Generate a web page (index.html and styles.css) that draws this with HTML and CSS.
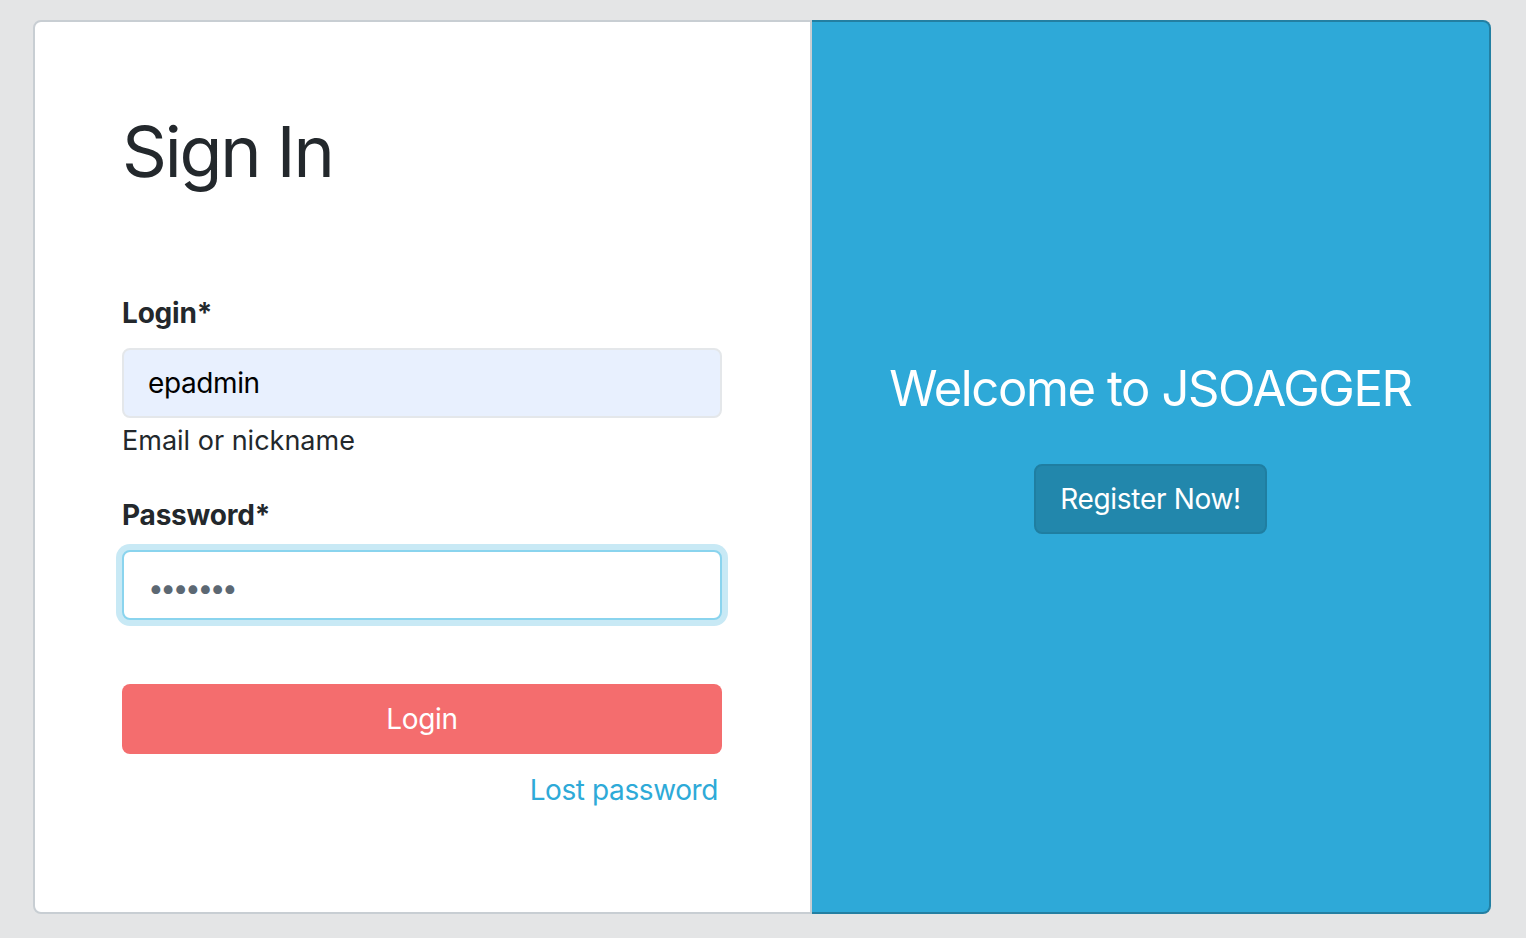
FILE: index.html
```html
<!DOCTYPE html>
<html lang="en">
<head>
<meta charset="utf-8">
<title>Sign In</title>
<link rel="stylesheet" href="styles.css">
</head>
<body>
<div class="page">
  <div class="card-group">
    <div class="card card-login">
      <h1 class="title">Sign In</h1>
      <form class="form">
        <div class="form-group">
          <label class="label" for="login">Login*</label>
          <input class="input input-autofill" id="login" type="text" value="epadmin">
          <div class="help">Email or nickname</div>
        </div>
        <div class="form-group">
          <label class="label" for="password">Password*</label>
          <input class="input input-focus" id="password" type="password" value="1234567">
        </div>
        <button type="button" class="btn-login">Login</button>
        <div class="lost-row"><a class="lost-link" href="#">Lost password</a></div>
      </form>
    </div>
    <div class="card card-welcome">
      <h2 class="welcome">Welcome to JSOAGGER</h2>
      <button type="button" class="btn-register">Register Now!</button>
    </div>
  </div>
</div>
</body>
</html>
```

FILE: styles.css
```css
* { box-sizing: border-box; }
html, body {
  margin: 0;
  padding: 0;
  background: #e4e5e6;
  font-family: Inter, "Noto Sans", "Liberation Sans", sans-serif;
  color: #23282c;
}
.page {
  padding: 20px 35px 25px 33px;
}
.card-group {
  display: flex;
  height: 894px;
}
.card-login {
  width: 779px;
  background: #fff;
  border: 2px solid #c8ced3;
  border-radius: 8px 0 0 8px;
  padding: 88px 88px 0 87px;
}
.title {
  margin: 0 0 98px;
  font-size: 70px;
  font-weight: 400;
  line-height: 84px;
  letter-spacing: -2.2px;
  color: #23282c;
}
.form { display: flex; flex-direction: column; }
.form-group { display: flex; flex-direction: column; }
.form-group + .form-group { margin-top: 35px; }
.label {
  font-size: 28px;
  font-weight: 700;
  line-height: 42px;
  margin-bottom: 14px;
  letter-spacing: -0.2px;
  color: #23282c;
}
.input {
  width: 600px;
  height: 70px;
  border-radius: 8px;
  font-family: inherit;
  font-size: 28px;
  padding: 0 24px;
  outline: none;
  margin: 0;
}
.input-autofill {
  background: #e8f0fe;
  border: 2px solid #e4e7ea;
  color: #000;
  letter-spacing: -0.4px;
}
.input-focus {
  background: #fff;
  border: 2px solid #8ad4ee;
  color: #5c6873;
  box-shadow: 0 0 0 6px #c8e9f5;
  letter-spacing: -3.4px;
  padding-top: 5px;
}
.help {
  margin-top: 4px;
  font-size: 27px;
  line-height: 37px;
  color: #23282c;
}
.btn-login {
  margin-top: 64px;
  width: 600px;
  height: 70px;
  border: none;
  border-radius: 8px;
  background: #f46d6e;
  color: #fff;
  font-family: inherit;
  font-size: 28px;
  letter-spacing: -0.3px;
  padding: 0;
}
.lost-row {
  margin-top: 15px;
  width: 600px;
  display: flex;
  justify-content: flex-end;
  padding-right: 4px;
}
.lost-link {
  font-size: 28px;
  line-height: 42px;
  letter-spacing: -0.4px;
  color: #2eaad8;
  text-decoration: none;
}
.card-welcome {
  width: 679px;
  background: #2ea9d8;
  border: 2px solid #237fa2;
  border-left: none;
  border-radius: 0 8px 8px 0;
  display: flex;
  flex-direction: column;
  align-items: center;
  padding-top: 337px;
}
.welcome {
  margin: 0 0 46px;
  font-size: 49px;
  font-weight: 400;
  line-height: 59px;
  letter-spacing: -1.4px;
  color: #fff;
}
.btn-register {
  height: 70px;
  padding: 0 24px;
  background: #2287ac;
  border: 2px solid #1f7ea1;
  border-radius: 8px;
  color: #fff;
  font-family: inherit;
  font-size: 28px;
  letter-spacing: -0.3px;
}
```
